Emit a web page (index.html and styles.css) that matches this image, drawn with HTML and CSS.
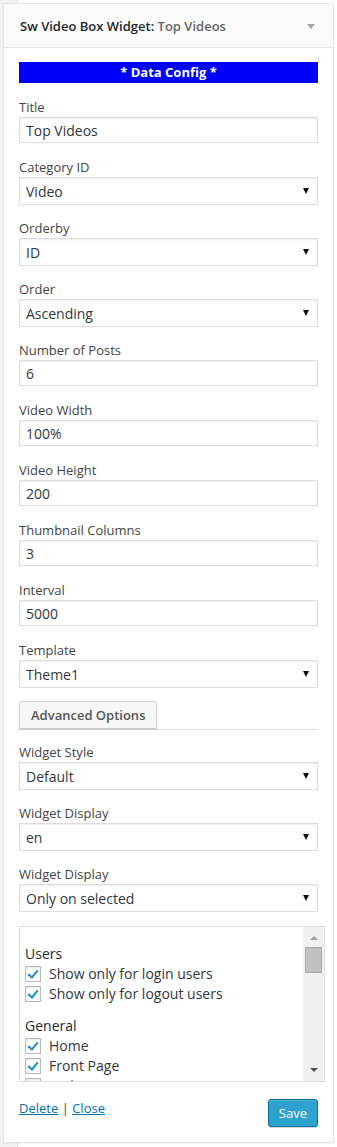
FILE: index.html
```html
<!DOCTYPE html>
<html lang="en">
<head>
    <meta charset="UTF-8">
    <meta name="viewport" content="width=device-width, initial-scale=1.0">
    <title>Sw Video Box Widget</title>
    <link rel="stylesheet" href="styles.css">
</head>
<body>
    <div class="widget">
        <div class="widget-top">
            <h3>Sw Video Box Widget: <span class="in-title">Top Videos</span></h3>
            <span class="toggle"></span>
        </div>

        <div class="widget-inside">
            <div class="section-title">* Data Config *</div>

            <div class="field">
                <label>Title</label>
                <input type="text" value="Top Videos">
            </div>
            <div class="field">
                <label>Category ID</label>
                <div class="select"><select><option>Video</option></select></div>
            </div>
            <div class="field">
                <label>Orderby</label>
                <div class="select"><select><option>ID</option></select></div>
            </div>
            <div class="field">
                <label>Order</label>
                <div class="select"><select><option>Ascending</option></select></div>
            </div>
            <div class="field">
                <label>Number of Posts</label>
                <input type="text" value="6">
            </div>
            <div class="field">
                <label>Video Width</label>
                <input type="text" value="100%">
            </div>
            <div class="field">
                <label>Video Height</label>
                <input type="text" value="200">
            </div>
            <div class="field">
                <label>Thumbnail Columns</label>
                <input type="text" value="3">
            </div>
            <div class="field">
                <label>Interval</label>
                <input type="text" value="5000">
            </div>
            <div class="field">
                <label>Template</label>
                <div class="select"><select><option>Theme1</option></select></div>
            </div>

            <div class="advanced">
                <button class="button">Advanced Options</button>
            </div>

            <div class="field">
                <label>Widget Style</label>
                <div class="select"><select><option>Default</option></select></div>
            </div>
            <div class="field">
                <label>Widget Display</label>
                <div class="select"><select><option>en</option></select></div>
            </div>
            <div class="field">
                <label>Widget Display</label>
                <div class="select"><select><option>Only on selected</option></select></div>
            </div>

            <div class="pages-box">
                <div class="pages-list">
                    <h4>Users</h4>
                    <label class="check"><span class="box checked"></span>Show only for login users</label>
                    <label class="check"><span class="box checked"></span>Show only for logout users</label>
                    <h4 class="group">General</h4>
                    <label class="check"><span class="box checked"></span>Home</label>
                    <label class="check"><span class="box checked"></span>Front Page</label>
                    <label class="check"><span class="box"></span>Archive</label>
                </div>
                <div class="scrollbar">
                    <span class="arrow-up"></span>
                    <span class="thumb"></span>
                    <span class="spacer"></span>
                    <span class="arrow-down"></span>
                </div>
            </div>

            <div class="widget-control">
                <div class="links"><a href="#">Delete</a> | <a href="#">Close</a></div>
                <button class="button-primary">Save</button>
            </div>
        </div>
    </div>
</body>
</html>
```

FILE: styles.css
```css
body {
    margin: 0;
    padding: 3px 4px 4px 3px;
    font-family: "Open Sans", sans-serif;
    font-size: 13px;
    color: #444;
    background: linear-gradient(to right, #f1f1f1 17px, #e2e2e2 17px, #e2e2e2 18px, #fff 18px);
}

.widget {
    width: 329px;
    border: 1px solid #e5e5e5;
    background: #fff;
    box-shadow: 0 1px 1px rgba(0,0,0,0.04);
}

.widget-top {
    height: 43px;
    background: #fafafa;
    border-bottom: 1px solid #e5e5e5;
    display: flex;
    align-items: center;
    justify-content: space-between;
    padding: 0 18px 0 16px;
}

.widget-top h3 {
    margin: 0;
    font-size: 13px;
    font-weight: 600;
    color: #23282d;
}

.in-title {
    color: #666;
}

.toggle {
    width: 0;
    height: 0;
    border-left: 4px solid transparent;
    border-right: 4px solid transparent;
    border-top: 5px solid #a0a5aa;
    margin-top: 2px;
}

.widget-inside {
    padding: 14px 15px 15px 15px;
}

.section-title {
    height: 21px;
    line-height: 21px;
    background: #0000ff;
    color: #fff;
    font-weight: 700;
    text-align: center;
    font-size: 13px;
    margin-bottom: 15px;
}

.field {
    margin-bottom: 15px;
}

.field:has(.select) {
    margin-bottom: 14px;
}

.field label {
    display: block;
    line-height: 18px;
    margin-bottom: 1px;
}

.field input,
.field select {
    display: block;
    width: 100%;
    box-sizing: border-box;
    margin: 0;
    border: 1px solid #ddd;
    box-shadow: inset 0 1px 2px rgba(0,0,0,0.07);
    background: #fff;
    font-family: "Open Sans", sans-serif;
    font-size: 14px;
    color: #32373c;
    padding: 0 6px;
    border-radius: 0;
    outline: none;
}

.field input {
    height: 26px;
}

.field select {
    height: 28px;
    -webkit-appearance: none;
    appearance: none;
}

.select {
    position: relative;
}

.select::after {
    content: "";
    position: absolute;
    right: 9px;
    top: 11px;
    border-left: 3px solid transparent;
    border-right: 3px solid transparent;
    border-top: 6px solid #111;
    pointer-events: none;
}

.advanced {
    border-bottom: 1px solid #ddd;
    margin-top: -1px;
    margin-bottom: 13px;
}

.button {
    display: block;
    height: 28px;
    padding: 0 11px;
    font-family: "Open Sans", sans-serif;
    font-size: 13px;
    font-weight: 600;
    color: #555;
    background: #f7f7f7;
    border: 1px solid #ccc;
    border-radius: 3px 3px 0 0;
    box-shadow: 0 1px 0 #ccc;
}

.pages-box {
    display: flex;
    width: 306px;
    height: 156px;
    box-sizing: border-box;
    border: 1px solid #ddd;
    overflow: hidden;
}

.pages-list {
    flex: 1;
    overflow: hidden;
    padding: 17px 0 0 5px;
    font-size: 14px;
    color: #32373c;
}

.pages-list h4 {
    margin: 0;
    font-size: 14px;
    font-weight: 400;
    line-height: 20px;
    color: #23282d;
}

.pages-list h4.group {
    margin-top: 12px;
}

.check {
    display: flex;
    align-items: center;
    line-height: 20px;
    height: 20px;
}

.box {
    width: 16px;
    height: 16px;
    box-sizing: border-box;
    border: 1px solid #b4b9be;
    background: #fff;
    box-shadow: inset 0 1px 2px rgba(0,0,0,0.1);
    margin-right: 8px;
    position: relative;
}

.box.checked::after {
    content: "";
    position: absolute;
    left: 4px;
    top: 1px;
    width: 4px;
    height: 8px;
    border-right: 2.5px solid #1e8cbe;
    border-bottom: 2.5px solid #1e8cbe;
    transform: rotate(40deg);
}

.scrollbar {
    width: 21px;
    background: #f0f0f0;
    display: flex;
    flex-direction: column;
    align-items: center;
}

.arrow-up {
    margin-top: 9px;
    border-left: 4px solid transparent;
    border-right: 4px solid transparent;
    border-bottom: 4px solid #a3a3a3;
}

.thumb {
    margin-top: 7px;
    width: 17px;
    height: 26px;
    box-sizing: border-box;
    background: #c1c1c1;
    border: 1px solid #a8a8a8;
}

.spacer {
    flex: 1;
}

.arrow-down {
    margin-bottom: 9px;
    border-left: 4px solid transparent;
    border-right: 4px solid transparent;
    border-top: 4px solid #505050;
}

.widget-control {
    display: flex;
    justify-content: space-between;
    align-items: flex-start;
    margin-top: 17px;
}

.links {
    color: #444;
    line-height: 18px;
}

.links a {
    color: #0073aa;
}

.button-primary {
    height: 28px;
    padding: 0 10px;
    font-family: "Open Sans", sans-serif;
    font-size: 13px;
    color: #fff;
    background: #2ea2cc;
    border: 1px solid #0074a2;
    border-radius: 3px;
    box-shadow: inset 0 1px 0 rgba(120,200,230,0.5), 0 1px 0 rgba(0,0,0,0.15);
}
```
